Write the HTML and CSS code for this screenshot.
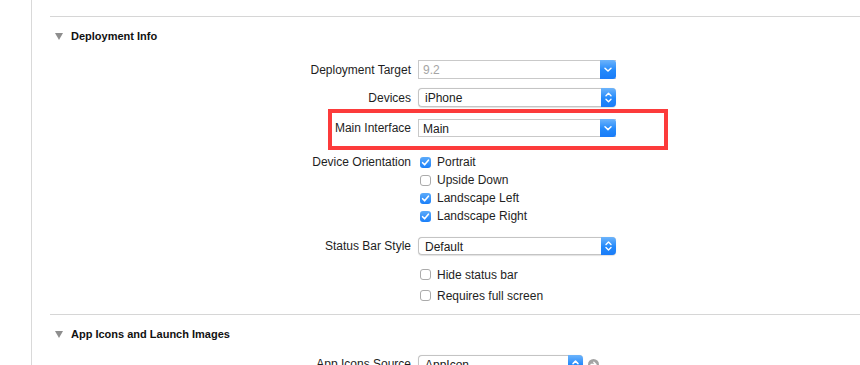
FILE: index.html
```html
<!DOCTYPE html>
<html>
<head>
<meta charset="utf-8">
<link rel="stylesheet" href="styles.css">
</head>
<body>
<div class="page">
  <div class="rail"></div>
  <div class="main">
    <div class="sep"></div>
    <div class="head"><span class="tri"></span>Deployment Info</div>
    <div class="form">
      <div class="row r-target">
        <span class="lbl">Deployment Target</span>
        <div class="combo">
          <span class="val dim">9.2</span>
          <span class="btn sq"><svg width="16" height="19" viewBox="0 0 16 19"><path d="M5 8.2 L8 11 L11 8.2" fill="none" stroke="#fff" stroke-width="1.5" stroke-linecap="round" stroke-linejoin="round"/></svg></span>
        </div>
      </div>
      <div class="row r-devices">
        <span class="lbl">Devices</span>
        <div class="popup">
          <span class="val">iPhone</span>
          <span class="btn rd"><svg width="15" height="19" viewBox="0 0 15 19"><path d="M5 7.8 L7.5 5.3 L10 7.8 M5 11.2 L7.5 13.7 L10 11.2" fill="none" stroke="#fff" stroke-width="1.4" stroke-linecap="round" stroke-linejoin="round"/></svg></span>
        </div>
      </div>
      <div class="row r-main">
        <span class="lbl">Main Interface</span>
        <div class="combo">
          <span class="val">Main</span>
          <span class="btn sq"><svg width="16" height="18" viewBox="0 0 16 18"><path d="M5 7.8 L8 10.6 L11 7.8" fill="none" stroke="#fff" stroke-width="1.5" stroke-linecap="round" stroke-linejoin="round"/></svg></span>
        </div>
        <div class="highlight"></div>
      </div>
      <div class="row r-orient">
        <span class="lbl">Device Orientation</span>
        <div class="checks">
          <div class="chk on"><span class="box"><svg width="11" height="11" viewBox="0 0 11 11"><path d="M2.6 5.7 L4.6 7.8 L8.4 3.2" fill="none" stroke="#fff" stroke-width="1.6" stroke-linecap="round" stroke-linejoin="round"/></svg></span>Portrait</div>
          <div class="chk"><span class="box"></span>Upside Down</div>
          <div class="chk on"><span class="box"><svg width="11" height="11" viewBox="0 0 11 11"><path d="M2.6 5.7 L4.6 7.8 L8.4 3.2" fill="none" stroke="#fff" stroke-width="1.6" stroke-linecap="round" stroke-linejoin="round"/></svg></span>Landscape Left</div>
          <div class="chk on"><span class="box"><svg width="11" height="11" viewBox="0 0 11 11"><path d="M2.6 5.7 L4.6 7.8 L8.4 3.2" fill="none" stroke="#fff" stroke-width="1.6" stroke-linecap="round" stroke-linejoin="round"/></svg></span>Landscape Right</div>
        </div>
      </div>
      <div class="row r-status">
        <span class="lbl">Status Bar Style</span>
        <div class="popup">
          <span class="val">Default</span>
          <span class="btn rd"><svg width="15" height="18" viewBox="0 0 15 18"><path d="M5 7.4 L7.5 4.9 L10 7.4 M5 10.6 L7.5 13.1 L10 10.6" fill="none" stroke="#fff" stroke-width="1.4" stroke-linecap="round" stroke-linejoin="round"/></svg></span>
        </div>
      </div>
      <div class="row r-opts">
        <span class="lbl"></span>
        <div class="checks wide">
          <div class="chk"><span class="box"></span>Hide status bar</div>
          <div class="chk"><span class="box"></span>Requires full screen</div>
        </div>
      </div>
    </div>
    <div class="sep sep2"></div>
    <div class="head"><span class="tri"></span>App Icons and Launch Images</div>
    <div class="form">
      <div class="row r-icons">
        <span class="lbl">App Icons Source</span>
        <div class="icons-ctl">
          <div class="popup short">
            <span class="val">AppIcon</span>
            <span class="btn rd"><svg width="15" height="18" viewBox="0 0 15 18"><path d="M5 8.6 L7.5 6.1 L10 8.6" fill="none" stroke="#fff" stroke-width="1.5" stroke-linecap="round" stroke-linejoin="round"/></svg></span>
          </div>
          <svg class="goto" width="11" height="11" viewBox="0 0 11 11"><circle cx="5.5" cy="5.5" r="5.5" fill="#a3a3a3"/><path d="M3 5.5 H8 M5.8 3.3 L8 5.5 L5.8 7.7" fill="none" stroke="#fff" stroke-width="1.3" stroke-linecap="round" stroke-linejoin="round"/></svg>
        </div>
      </div>
    </div>
  </div>
</div>
</body>
</html>
```

FILE: styles.css
```css
html, body {
  margin: 0;
  padding: 0;
  background: #fff;
  height: 365px;
  overflow: hidden;
}
body {
  font-family: "Liberation Sans", Arial, sans-serif;
  font-size: 12px;
  color: #202020;
}
.page {
  display: flex;
  height: 365px;
}
.rail {
  width: 31px;
  border-right: 1px solid #d9d9d9;
  flex: none;
}
.main {
  flex: 1;
  padding-top: 16px;
}
.sep {
  height: 1px;
  background: #d6d6d6;
  margin-left: 18px;
}
.sep2 {
  margin-top: 8px;
}
.head {
  height: 37px;
  display: flex;
  align-items: center;
  padding-left: 23px;
  font-size: 11px;
  font-weight: bold;
  color: #111;
}
.tri {
  width: 0;
  height: 0;
  border-left: 4px solid transparent;
  border-right: 4px solid transparent;
  border-top: 7px solid #8e8e8e;
  margin-right: 8px;
  margin-top: 1px;
}
.form {
  display: flex;
  flex-direction: column;
}
.row {
  display: grid;
  grid-template-columns: 379px auto;
  column-gap: 7px;
  align-items: center;
  position: relative;
}
.lbl {
  text-align: right;
  color: #1e1e1e;
}
.r-target { margin-top: 6px; height: 19px; }
.r-devices { margin-top: 9px; height: 19px; }
.r-main { margin-top: 12px; height: 18px; }
.r-orient { margin-top: 16px; align-items: start; }
.r-orient .lbl { line-height: 18px; }
.r-status { margin-top: 12px; height: 18px; }
.r-opts { margin-top: 9px; }
.r-icons { margin-top: 3px; height: 18px; }

.combo, .popup {
  width: 198px;
  height: 100%;
  box-sizing: border-box;
  display: flex;
  align-items: center;
  background: #fff;
  position: relative;
}
.combo {
  border: 1px solid #c9c9c9;
  border-right: none;
}
.popup {
  border: 1px solid #c4c4c4;
  border-right: none;
  border-radius: 4px;
  box-shadow: 0 0.5px 1px rgba(0,0,0,0.12);
}
.popup.short { width: 165px; }
.val {
  flex: 1;
  padding-left: 4px;
  line-height: 1;
  padding-top: 1px;
}
.popup .val { padding-left: 6px; }
.val.dim { color: #a5a5a5; }
.btn {
  width: 16px;
  align-self: stretch;
  margin: -1px 0;
  background: linear-gradient(#6db4fb, #2389fb 55%, #1a7cf8);
  display: flex;
  align-items: center;
  justify-content: center;
}
.btn.sq { border-radius: 0 3px 3px 0; }
.btn.rd { border-radius: 0 4px 4px 0; width: 15px; }
.btn svg { display: block; }

.highlight {
  position: absolute;
  left: 296px;
  top: -10px;
  width: 332px;
  height: 33px;
  border: 4px solid #fc3b3b;
  pointer-events: none;
}

.checks {
  display: flex;
  flex-direction: column;
}
.chk {
  height: 18px;
  display: flex;
  align-items: center;
  padding-left: 2px;
  color: #1e1e1e;
}
.checks.wide .chk { height: 21px; }
.box {
  width: 11px;
  height: 11px;
  box-sizing: border-box;
  border: 1px solid #ababab;
  border-radius: 3px;
  background: #fff;
  margin-right: 6px;
  display: flex;
  flex: none;
}
.chk.on .box {
  border: none;
  background: linear-gradient(#5cabfa, #1a7ff9);
}
.box svg { display: block; }

.icons-ctl {
  display: flex;
  align-items: center;
  height: 100%;
}
.goto {
  margin-left: 5px;
  display: block;
}
```
